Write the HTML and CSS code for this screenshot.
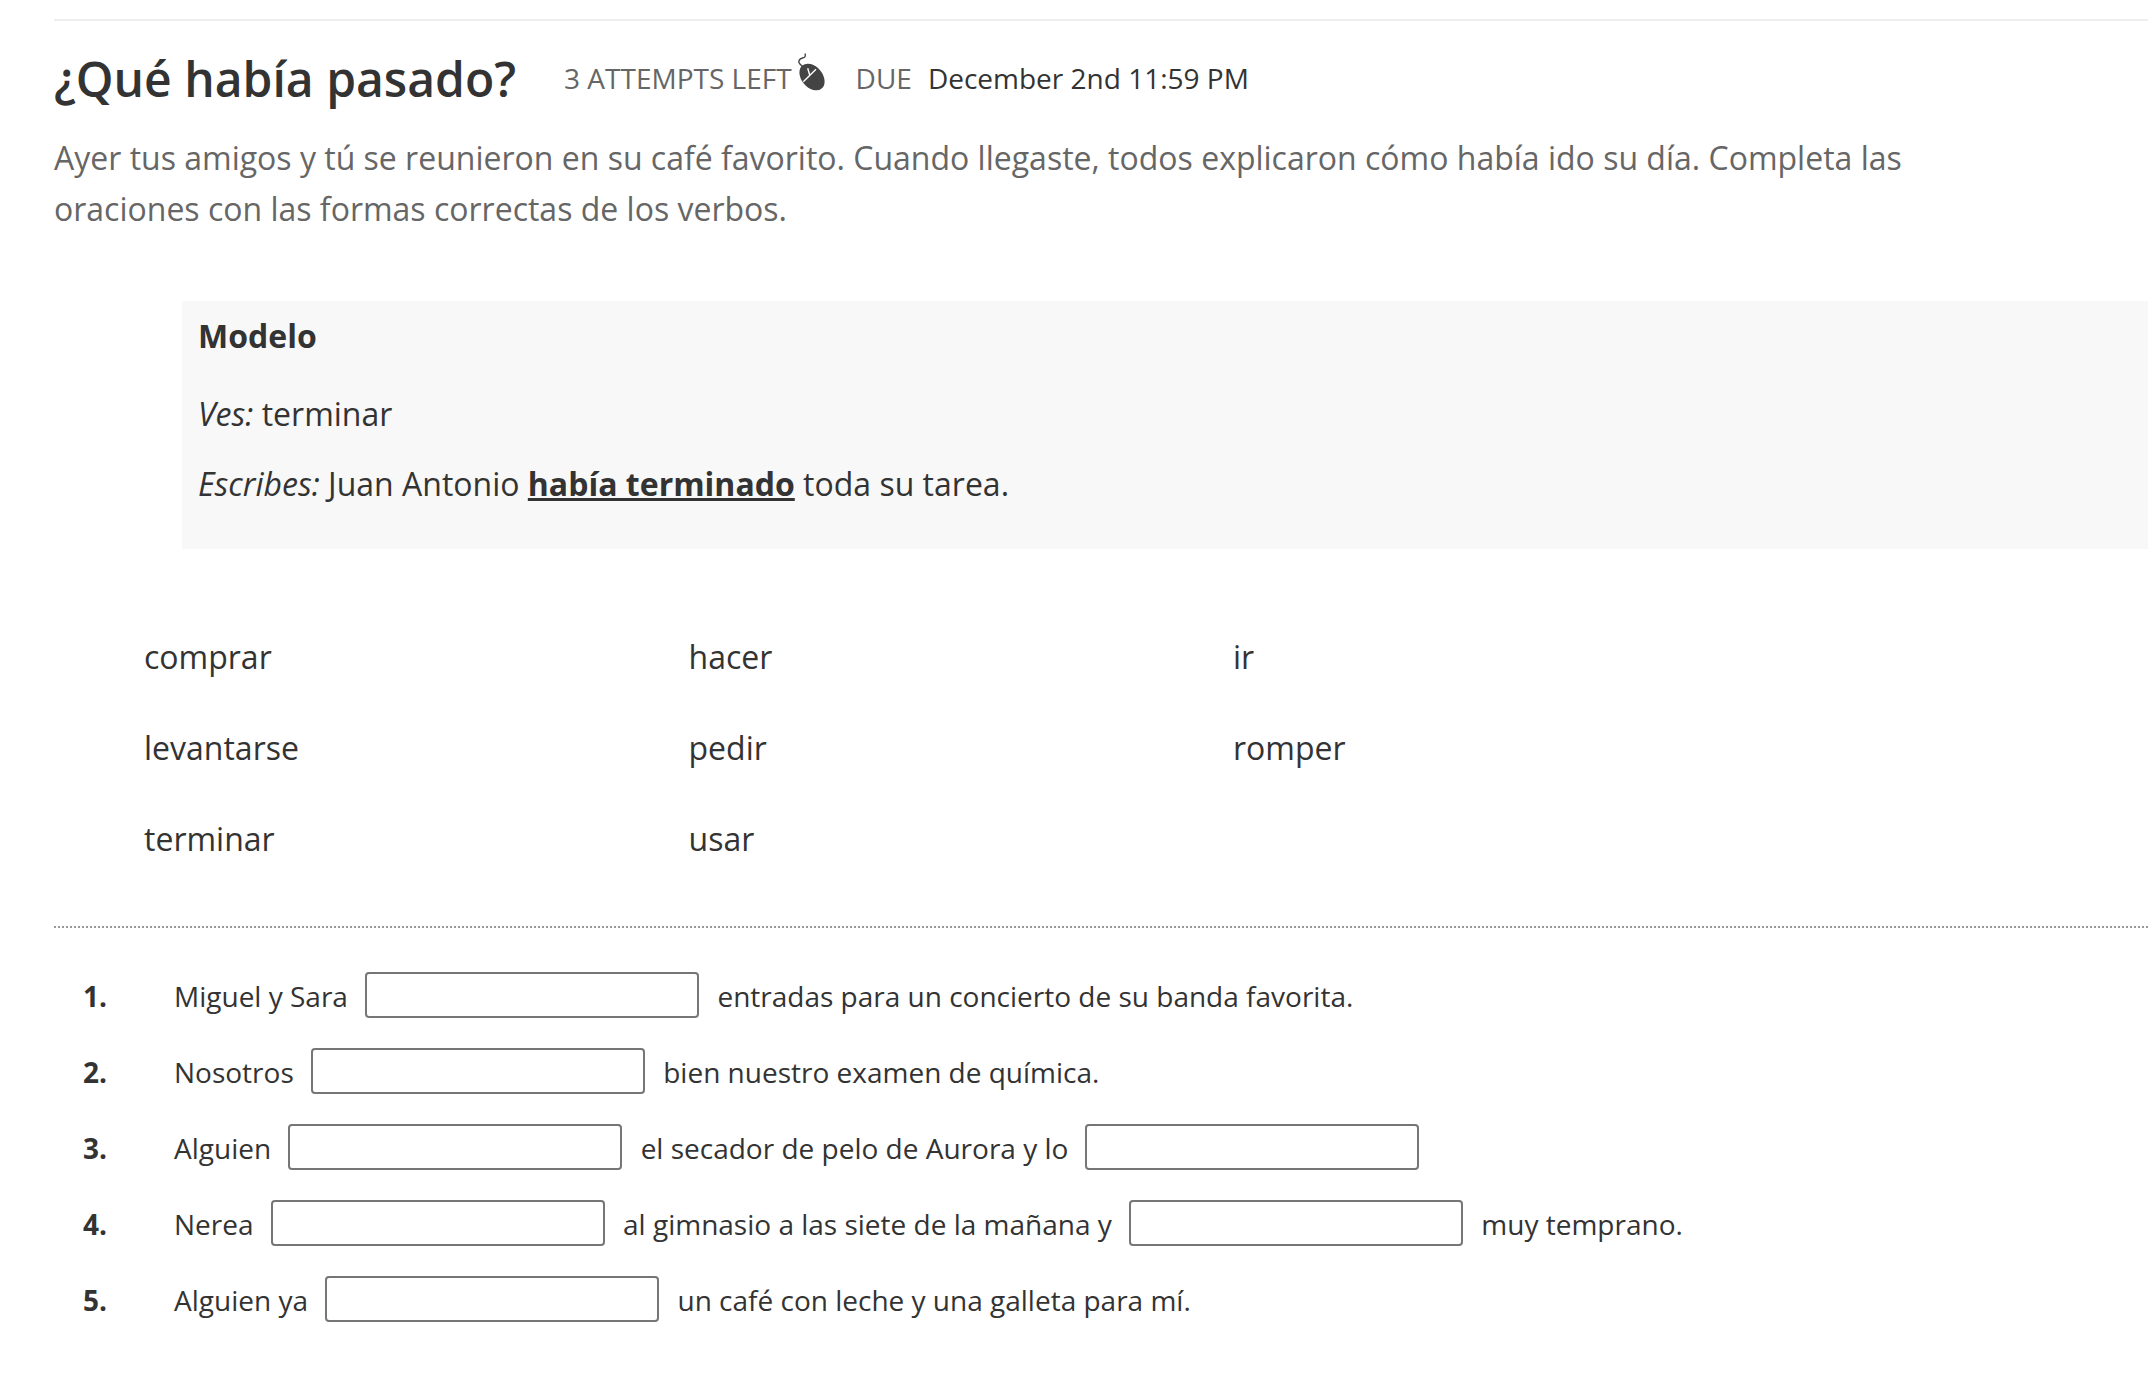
FILE: index.html
```html
<!DOCTYPE html>
<html lang="en">
<head>
    <meta charset="UTF-8">
    <title>¿Qué había pasado?</title>
    <link rel="stylesheet" href="styles.css">
</head>
<body>
    <div class="activity">
        <!-- Header -->
        <div class="activity-header">
            <h1>¿Qué había pasado?</h1>
            <span class="attempts">3 ATTEMPTS LEFT</span>
            <svg class="mouse-icon" viewBox="0 0 28 38" width="28" height="38">
                <path d="M8 .5C9 3 8 4.5 5.5 5C2 6 1 8.5 2.5 10.5L5.7 13.7" fill="none" stroke="#444" stroke-width="1.4"/>
                <ellipse cx="15" cy="24" rx="10.5" ry="15" transform="rotate(-40 15 24)" fill="#444"/>
                <path d="M6.3 28.7L19 16.3M10.7 15.3L13 23" fill="none" stroke="#fff" stroke-width="1.4"/>
            </svg>
            <span class="due-label">DUE</span>
            <span class="due-date">December 2nd 11:59 PM</span>
        </div>
        <p class="intro">Ayer tus amigos y tú se reunieron en su café favorito. Cuando llegaste, todos explicaron cómo había ido su día. Completa las oraciones con las formas correctas de los verbos.</p>

        <!-- Model -->
        <div class="model">
            <h2>Modelo</h2>
            <p><em>Ves:</em> terminar</p>
            <p><em>Escribes:</em> Juan Antonio <strong>había terminado</strong> toda su tarea.</p>
        </div>

        <!-- Word bank -->
        <div class="word-bank">
            <span>comprar</span>
            <span>hacer</span>
            <span>ir</span>
            <span>levantarse</span>
            <span>pedir</span>
            <span>romper</span>
            <span>terminar</span>
            <span>usar</span>
        </div>

        <!-- Questions -->
        <ol class="questions">
            <li><b>1.</b><span>Miguel y Sara</span><input type="text"><span>entradas para un concierto de su banda favorita.</span></li>
            <li><b>2.</b><span>Nosotros</span><input type="text"><span>bien nuestro examen de química.</span></li>
            <li><b>3.</b><span>Alguien</span><input type="text"><span>el secador de pelo de Aurora y lo</span><input type="text"></li>
            <li><b>4.</b><span>Nerea</span><input type="text"><span>al gimnasio a las siete de la mañana y</span><input type="text"><span>muy temprano.</span></li>
            <li><b>5.</b><span>Alguien ya</span><input type="text"><span>un café con leche y una galleta para mí.</span></li>
        </ol>
    </div>
</body>
</html>
```

FILE: styles.css
```css
html, body {
    margin: 0;
    overflow-x: hidden;
}
body {
    font-family: "Open Sans", sans-serif;
    background-color: #fff;
    color: #333;
}
.activity {
    margin-left: 54px;
    padding-top: 19px;
}
.activity-header {
    display: flex;
    align-items: center;
    height: 86px;
    padding-top: 14px;
    border-top: 2px solid #eee;
}
h1 {
    margin: 0 48px 0 0;
    font-size: 48px;
    font-weight: 600;
    color: #333;
}
.attempts {
    font-size: 28px;
    color: #666;
}
.mouse-icon {
    margin: -12px 31px 0 5px;
}
.due-label {
    font-size: 28px;
    color: #666;
    margin-right: 16px;
}
.due-date {
    font-size: 28px;
    color: #333;
}
.intro {
    margin: 11px 0 0;
    width: 1910px;
    font-size: 32px;
    line-height: 51px;
    color: #666;
}
.model {
    margin: 67px 0 0 128px;
    padding: 15px 16px 0;
    height: 233px;
    background-color: #f8f8f8;
}
.model h2 {
    margin: 0 0 32px;
    font-size: 32px;
    font-weight: 700;
    line-height: 40px;
}
.model p {
    margin: 0 0 19px;
    font-size: 32px;
    line-height: 51px;
}
.model strong {
    text-decoration: underline;
}
.word-bank {
    display: grid;
    grid-template-columns: repeat(3, 544.5px);
    grid-auto-rows: 91px;
    align-items: center;
    margin-top: 62px;
    padding-left: 90px;
    padding-bottom: 42px;
    font-size: 32px;
    border-bottom: 2px dotted #999;
}
.questions {
    list-style: none;
    margin: 29px 0 0;
    padding: 0 0 0 29px;
    font-size: 28px;
}
.questions li {
    display: flex;
    align-items: center;
    height: 76px;
}
.questions b {
    width: 91px;
    font-weight: 700;
}
.questions b, .questions span {
    padding-top: 2px;
}
.questions input {
    box-sizing: border-box;
    width: 334px;
    height: 46px;
    margin: 0 18.5px 0 17px;
    border: 2px solid #767676;
    border-radius: 4px;
    background-color: #fff;
}
```
